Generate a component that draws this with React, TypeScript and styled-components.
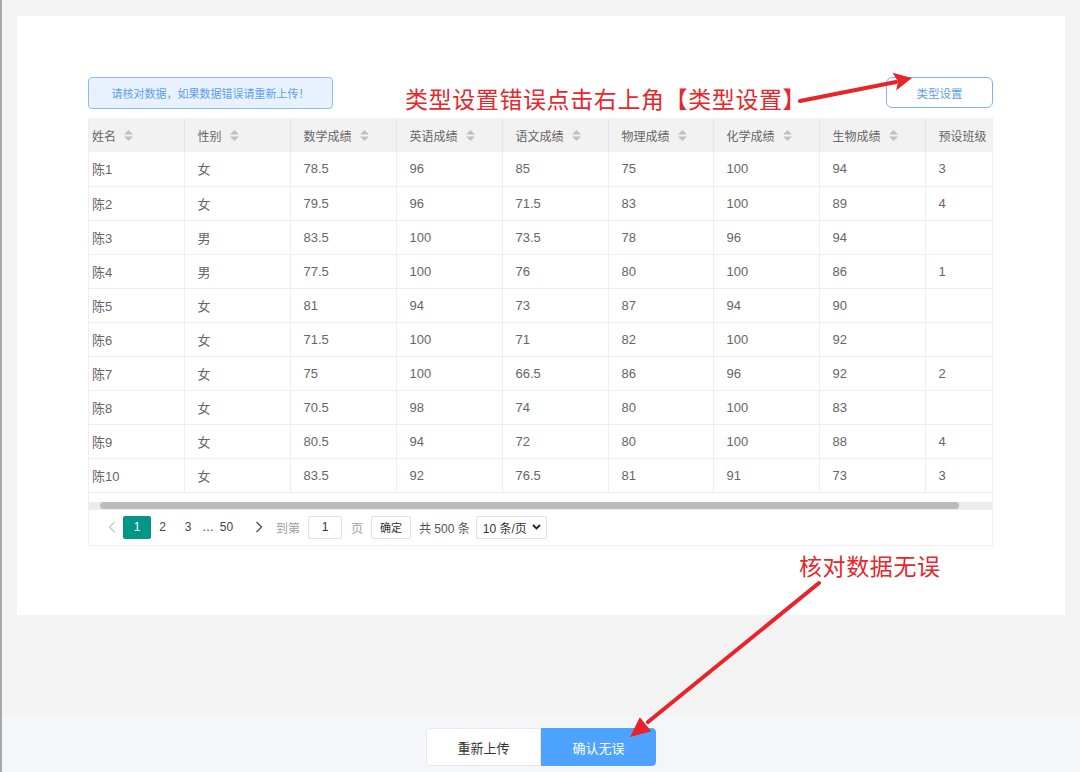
import React from "react";
import styled, { createGlobalStyle } from "styled-components";

const Global = createGlobalStyle`
  html, body { margin: 0; padding: 0; }
  body {
    background: #f3f3f3;
    font-family: "Liberation Sans", "Noto Sans CJK SC", sans-serif;
    color: #666;
  }
  * { box-sizing: border-box; }
`;

const Page = styled.div`
  position: relative;
  width: 1080px;
  height: 772px;
  overflow: hidden;
  border-left: 2px solid #a8a8a8;
  display: flex;
  flex-direction: column;
`;

const Main = styled.div`
  height: 715px;
  padding: 16px 15px 0 15px;
  background: #f3f3f3;
`;

const Card = styled.div`
  background: #fff;
  height: 599px;
  padding: 61px 72px 0 71px;
`;

const Toolbar = styled.div`
  display: flex;
  justify-content: space-between;
  align-items: flex-start;
  margin-bottom: 9px;
`;

const Alert = styled.div`
  width: 245px;
  height: 32px;
  background: #e8f2fe;
  border: 1px solid #8bbdf7;
  border-radius: 4px;
  color: #5c9df1;
  font-size: 11px;
  display: flex;
  align-items: center;
  justify-content: center;
`;

const TypeButton = styled.button`
  width: 107px;
  height: 31px;
  background: #fff;
  border: 1px solid #7db4f5;
  border-radius: 6px;
  color: #5a9ef3;
  font-size: 11.5px;
  font-family: inherit;
  padding: 0;
`;

const TableBox = styled.div`
  width: 905px;
  border-left: 1px solid #eee;
  border-right: 1px solid #eee;
  border-bottom: 1px solid #eee;
  overflow: hidden;
`;

const Table = styled.table`
  border-collapse: collapse;
  table-layout: fixed;
  width: 956px;
`;

const Th = styled.th<{ $first?: boolean }>`
  height: 34px;
  background: #f2f2f2;
  border-right: 1px solid #e6e6e6;
  padding: 0 0 0 ${(p) => (p.$first ? 3 : 13)}px;
  text-align: left;
  font-weight: normal;
  font-size: 12px;
  color: #666;
  white-space: nowrap;
`;

const Td = styled.td<{ $first?: boolean }>`
  height: 34px;
  border-right: 1px solid #eee;
  border-bottom: 1px solid #eee;
  padding: 0 0 0 ${(p) => (p.$first ? 3 : 13)}px;
  font-size: 13px;
  color: #666;
  white-space: nowrap;
`;

const HeadInner = styled.span`
  display: inline-flex;
  align-items: center;
  gap: 8px;
`;

const SortIcon = () => (
  <svg width="9" height="11" viewBox="0 0 9 11">
    <polygon points="4.5,0 9,4.5 0,4.5" fill="#c0c0c0" />
    <polygon points="0,6.5 9,6.5 4.5,11" fill="#c0c0c0" />
  </svg>
);

const ScrollArea = styled.div`
  padding-top: 9px;
  border-bottom: 1px solid #eee;
`;

const Track = styled.div`
  height: 7px;
  background: #ececec;
`;

const Thumb = styled.div`
  margin-left: 11px;
  width: 859px;
  height: 7px;
  border-radius: 4px;
  background: #bcbcbc;
`;

const Pager = styled.div`
  height: 35px;
  display: flex;
  align-items: center;
  padding-left: 12px;
  font-size: 12px;
  color: #666;
`;

const PageArrow = styled.span<{ $disabled?: boolean; $ml?: number }>`
  width: 22px;
  display: flex;
  justify-content: center;
  margin-left: ${(p) => p.$ml ?? 0}px;
  color: ${(p) => (p.$disabled ? "#c8c8c8" : "#555")};
`;

const PageNum = styled.span<{ $active?: boolean; $w?: number }>`
  height: 23px;
  min-width: ${(p) => p.$w ?? 26}px;
  display: flex;
  align-items: center;
  justify-content: center;
  color: ${(p) => (p.$active ? "#fff" : "#444")};
  background: ${(p) => (p.$active ? "#009688" : "transparent")};
  border-radius: ${(p) => (p.$active ? 2 : 0)}px;
`;

const PagerLabel = styled.span<{ $light?: boolean; $ml?: number }>`
  color: ${(p) => (p.$light ? "#a0a0a0" : "#555")};
  margin-left: ${(p) => p.$ml ?? 0}px;
  white-space: nowrap;
`;

const PagerInput = styled.div`
  width: 34px;
  height: 23px;
  border: 1px solid #e2e2e2;
  border-radius: 2px;
  margin-left: 8px;
  display: flex;
  align-items: center;
  justify-content: center;
  color: #333;
`;

const PagerBtn = styled.div`
  width: 40px;
  height: 23px;
  border: 1px solid #e2e2e2;
  border-radius: 2px;
  margin-left: 8px;
  display: flex;
  align-items: center;
  justify-content: center;
  color: #333;
  font-size: 11px;
`;

const PagerSelect = styled.div`
  width: 71px;
  height: 23px;
  border: 1px solid #e2e2e2;
  border-radius: 2px;
  margin-left: 6px;
  display: flex;
  align-items: center;
  justify-content: space-between;
  padding: 0 5px 0 6px;
  color: #333;
`;

const Footer = styled.div`
  flex: 1;
  background: #f5f6fa;
  display: flex;
  justify-content: center;
  padding-top: 13px;
`;

const FootButton = styled.button<{ $primary?: boolean }>`
  width: 115px;
  height: 38px;
  font-family: inherit;
  font-size: 13px;
  padding: 0;
  color: ${(p) => (p.$primary ? "#fff" : "#333")};
  background: ${(p) => (p.$primary ? "#4ea3fe" : "#fff")};
  border: 1px solid ${(p) => (p.$primary ? "#4ea3fe" : "#e8e8e8")};
  border-radius: ${(p) => (p.$primary ? "0 4px 4px 0" : "4px 0 0 4px")};
`;

const Note = styled.div<{ $x: number; $y: number }>`
  position: absolute;
  left: ${(p) => p.$x}px;
  top: ${(p) => p.$y}px;
  font-family: "Noto Sans CJK SC", sans-serif;
  font-size: 23px;
  line-height: 23px;
  letter-spacing: 0.6px;
  color: #e8262c;
  white-space: nowrap;
`;

const ArrowLayer = styled.svg`
  position: absolute;
  left: -2px;
  top: 0;
  pointer-events: none;
`;

const headers = ["姓名", "性别", "数学成绩", "英语成绩", "语文成绩", "物理成绩", "化学成绩", "生物成绩", "预设班级"];
const widths = [95, 106, 106, 106, 106, 105, 106, 106, 120];

const rows: string[][] = [
  ["陈1", "女", "78.5", "96", "85", "75", "100", "94", "3"],
  ["陈2", "女", "79.5", "96", "71.5", "83", "100", "89", "4"],
  ["陈3", "男", "83.5", "100", "73.5", "78", "96", "94", ""],
  ["陈4", "男", "77.5", "100", "76", "80", "100", "86", "1"],
  ["陈5", "女", "81", "94", "73", "87", "94", "90", ""],
  ["陈6", "女", "71.5", "100", "71", "82", "100", "92", ""],
  ["陈7", "女", "75", "100", "66.5", "86", "96", "92", "2"],
  ["陈8", "女", "70.5", "98", "74", "80", "100", "83", ""],
  ["陈9", "女", "80.5", "94", "72", "80", "100", "88", "4"],
  ["陈10", "女", "83.5", "92", "76.5", "81", "91", "73", "3"],
];

const Chevron = ({ dir }: { dir: "left" | "right" }) => (
  <svg width="8" height="12" viewBox="0 0 8 12">
    <polyline
      points={dir === "left" ? "6.5,1 1.5,6 6.5,11" : "1.5,1 6.5,6 1.5,11"}
      fill="none"
      stroke="currentColor"
      strokeWidth="1.4"
    />
  </svg>
);

const Caret = () => (
  <svg width="9" height="6" viewBox="0 0 9 6">
    <polyline points="1,1 4.5,4.5 8,1" fill="none" stroke="#222" strokeWidth="1.8" />
  </svg>
);

export default function App() {
  return (
    <>
      <Global />
      <Page>
        <Main>
          <Card>
            <Toolbar>
              <Alert>请核对数据，如果数据错误请重新上传！</Alert>
              <TypeButton>类型设置</TypeButton>
            </Toolbar>
            <TableBox>
              <Table>
                <colgroup>
                  {widths.map((w, i) => (
                    <col key={i} style={{ width: w }} />
                  ))}
                </colgroup>
                <thead>
                  <tr>
                    {headers.map((h, i) => (
                      <Th key={h} $first={i === 0}>
                        <HeadInner>
                          {h}
                          {i < 8 && <SortIcon />}
                        </HeadInner>
                      </Th>
                    ))}
                  </tr>
                </thead>
                <tbody>
                  {rows.map((r, ri) => (
                    <tr key={ri}>
                      {r.map((c, ci) => (
                        <Td key={ci} $first={ci === 0}>
                          {c}
                        </Td>
                      ))}
                    </tr>
                  ))}
                </tbody>
              </Table>
              <ScrollArea>
                <Track>
                  <Thumb />
                </Track>
              </ScrollArea>
              <Pager>
                <PageArrow $disabled>
                  <Chevron dir="left" />
                </PageArrow>
                <PageNum $active $w={28}>1</PageNum>
                <PageNum $w={23}>2</PageNum>
                <PageNum $w={28}>3</PageNum>
                <PageNum $w={10}>…</PageNum>
                <PageNum $w={25}>50</PageNum>
                <PageArrow $ml={9}>
                  <Chevron dir="right" />
                </PageArrow>
                <PagerLabel $light $ml={6}>到第</PagerLabel>
                <PagerInput>1</PagerInput>
                <PagerLabel $light $ml={9}>页</PagerLabel>
                <PagerBtn>确定</PagerBtn>
                <PagerLabel $ml={8}>共 500 条</PagerLabel>
                <PagerSelect>
                  <span>10 条/页</span>
                  <Caret />
                </PagerSelect>
              </Pager>
            </TableBox>
          </Card>
        </Main>
        <Footer>
          <FootButton>重新上传</FootButton>
          <FootButton $primary>确认无误</FootButton>
        </Footer>

        <Note $x={403} $y={87}>类型设置错误点击右上角【类型设置】</Note>
        <Note $x={797} $y={554}>核对数据无误</Note>
        <ArrowLayer width="1080" height="772" viewBox="0 0 1080 772">
          <line x1="800" y1="101" x2="896" y2="82" stroke="#e8232a" strokeWidth="4" strokeLinecap="round" />
          <polygon points="912,78 896.2,90.4 898,81.6 892.6,72.8" fill="#e8232a" />
          <line x1="819" y1="583" x2="648" y2="722" stroke="#e8232a" strokeWidth="4" strokeLinecap="round" />
          <polygon points="630,737 639.8,717.3 645.5,724.3 651.2,731.3" fill="#e8232a" />
        </ArrowLayer>
      </Page>
    </>
  );
}
